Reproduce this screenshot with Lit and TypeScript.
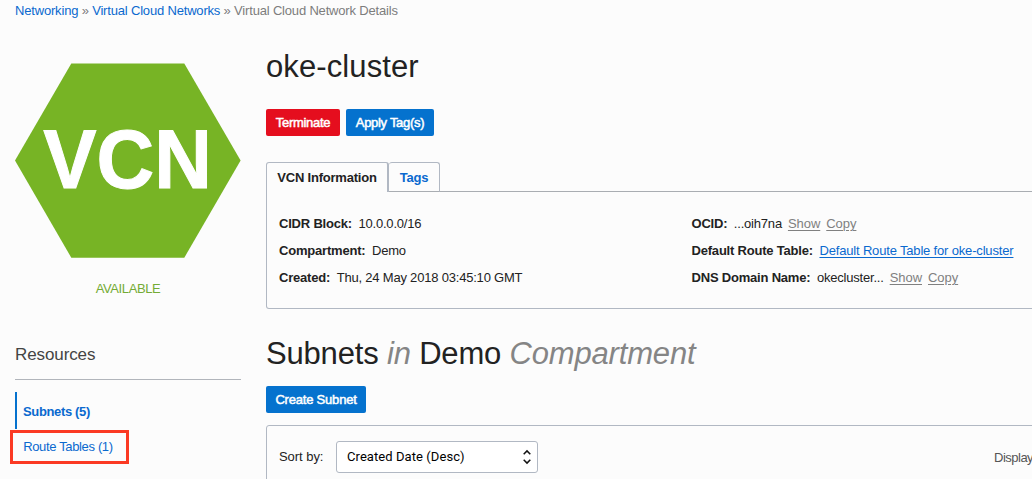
import { LitElement, html, css, svg } from "lit";
import { customElement, property } from "lit/decorators.js";

@customElement("detail-row")
export class DetailRow extends LitElement {
  @property() label = "";
  static styles = css`
    :host { display: flex; height: 27px; line-height: 27px; white-space: nowrap; }
    .label { font-weight: bold; letter-spacing: -0.2px; margin-right: 6.5px; }
    .value { letter-spacing: -0.2px; }
  `;
  render() {
    return html`<span class="label">${this.label}:</span><span class="value"><slot></slot></span>`;
  }
}

@customElement("vcn-badge")
export class VcnBadge extends LitElement {
  static styles = css`
    :host { display: block; width: 226px; height: 196px; }
    svg { display: block; }
    polygon { fill: #77b425; }
    text { font: bold 82.5px "Liberation Sans", Arial, sans-serif; fill: #fff; stroke: #fff; stroke-width: 1px; }
  `;
  render() {
    return html`<svg width="226" height="196" viewBox="0 0 226 196">
      ${svg`<polygon points="56.3,0.5 169.3,0.5 225.6,97.5 169.3,194.7 56.3,194.7 0,97.5"></polygon>
      <text x="28.3" y="124.5" textLength="168.5" lengthAdjust="spacingAndGlyphs">VCN</text>`}
    </svg>`;
  }
}

@customElement("app-root")
export class AppRoot extends LitElement {
  static styles = css`
    :host {
      display: block; width: 1032px; height: 479px; overflow: hidden; box-sizing: border-box;
      background: #fcfcfc; color: #222; padding-left: 15px;
      font: 13px/16px "Liberation Sans", Arial, sans-serif; white-space: nowrap;
    }
    a { color: #0a69cf; text-decoration: none; }
    nav { height: 45px; padding-top: 3px; box-sizing: border-box; letter-spacing: -0.18px; color: #7d7d7d; }
    .page { display: grid; grid-template-columns: 226px 1000px; column-gap: 25px; }
    aside { padding-top: 18px; }
    .status { margin-top: 22px; text-align: center; color: #74ab35; letter-spacing: -0.4px; }
    .resources {
      margin: 46px 0 0; height: 36px; border-bottom: 1px solid #b1b5bb; color: #444;
      font-size: 17px; font-weight: normal; line-height: 24px; letter-spacing: -0.1px;
    }
    .menu { margin-top: 12px; letter-spacing: -0.35px; }
    .menu a { display: block; box-sizing: border-box; }
    .current { height: 37px; line-height: 39px; padding-left: 6px; border-left: 2px solid #0572ce; font-weight: bold; }
    .marked {
      width: 119px; height: 34px; line-height: 28px; margin: 1px 0 0 -5px; padding: 0 0 0 10.2px;
      border: 3px solid #fb3a24;
    }
    h1, h2 { margin: 0; font-size: 31px; font-weight: normal; line-height: 36px; }
    h1 { padding-top: 4px; letter-spacing: 0.1px; }
    h2 { margin-top: 27px; letter-spacing: -0.18px; }
    h2 i { color: #858585; }
    .buttons { display: flex; gap: 6px; margin-top: 24px; }
    button {
      height: 27px; padding: 0; border: 0; border-radius: 2px; background: #0572ce; color: #fff;
      font: 13px/27px "Liberation Sans", Arial, sans-serif; -webkit-text-stroke: 0.5px #fff; letter-spacing: -0.3px;
    }
    .danger { width: 74px; background: #e50e1e; }
    .apply { width: 88px; }
    .create { display: block; width: 100px; margin-top: 14px; letter-spacing: -0.2px; }
    .tabs { display: flex; height: 30px; margin-top: 26px; font-weight: bold; letter-spacing: -0.22px; }
    .tab {
      box-sizing: border-box; height: 30px; line-height: 30px; text-align: center;
      border: 1px solid #b1b8c3; border-radius: 3px 3px 0 0;
    }
    .info { width: 123px; border-bottom: 0; border-right-width: 2px; }
    .tags { width: 51px; border-left: 0; border-bottom-color: #a9adb2; }
    .rule { flex: 1; border-bottom: 1px solid #a9adb2; }
    .panel {
      display: grid; grid-template-columns: 412.5px 1fr; box-sizing: border-box; height: 117px; padding: 18px 0 0 12px;
      border: 1px solid #b1b8c3; border-top: 0; border-radius: 0 0 0 3px;
    }
    .panel a { text-decoration: underline; text-underline-offset: 2px; text-decoration-thickness: 1px; letter-spacing: -0.17px; }
    .panel .quiet { margin-left: 6px; letter-spacing: -0.05px; color: #808080; }
    .list {
      display: flex; align-items: flex-start; box-sizing: border-box; height: 80px; margin-top: 12px; padding: 15px 0 0 12px;
      border: 1px solid #b1b8c3; border-radius: 3px 0 0 0;
    }
    .sort { line-height: 32px; width: 57px; letter-spacing: -0.05px; }
    .select {
      display: flex; justify-content: space-between; align-items: center; box-sizing: border-box;
      width: 202px; height: 32px; padding: 0 5px 0 10px; border: 1px solid #b1b8c3; border-radius: 3px;
      background: #fff; color: #000; font-family: Roboto, sans-serif; line-height: 32px; letter-spacing: 0.07px;
    }
    .select svg { fill: none; stroke: #111; stroke-width: 1.5; }
    .display { margin-left: 456px; line-height: 33px; letter-spacing: -0.5px; color: #555; }
  `;
  render() {
    return html`
      <nav><a>Networking</a> » <a>Virtual Cloud Networks</a> » Virtual Cloud Network Details</nav>
      <div class="page">
        <aside>
          <vcn-badge></vcn-badge>
          <div class="status">AVAILABLE</div>
          <h3 class="resources">Resources</h3>
          <div class="menu">
            <a class="current">Subnets (5)</a>
            <a class="marked">Route Tables (1)</a>
          </div>
        </aside>
        <main>
          <h1>oke-cluster</h1>
          <div class="buttons">
            <button class="danger">Terminate</button><button class="apply">Apply Tag(s)</button>
          </div>
          <div class="tabs">
            <div class="tab info">VCN Information</div>
            <div class="tab tags"><a>Tags</a></div>
            <div class="rule"></div>
          </div>
          <section class="panel">
            <div>
              <detail-row label="CIDR Block">10.0.0.0/16</detail-row>
              <detail-row label="Compartment">Demo</detail-row>
              <detail-row label="Created">Thu, 24 May 2018 03:45:10 GMT</detail-row>
            </div>
            <div>
              <detail-row label="OCID">...oih7na<a class="quiet">Show</a><a class="quiet">Copy</a></detail-row>
              <detail-row label="Default Route Table"><a>Default Route Table for oke-cluster</a></detail-row>
              <detail-row label="DNS Domain Name">okecluster...<a class="quiet">Show</a><a class="quiet">Copy</a></detail-row>
            </div>
          </section>
          <h2>Subnets <i>in</i> Demo <i>Compartment</i></h2>
          <button class="create">Create Subnet</button>
          <section class="list">
            <span class="sort">Sort by:</span>
            <div class="select">Created Date (Desc)
              <svg width="10" height="16" viewBox="0 0 10 16"><path d="M1.7 5.2 5 1.9 8.3 5.2M1.7 10.8 5 14.1 8.3 10.8"></path></svg>
            </div>
            <span class="display">Display</span>
          </section>
        </main>
      </div>`;
  }
}
